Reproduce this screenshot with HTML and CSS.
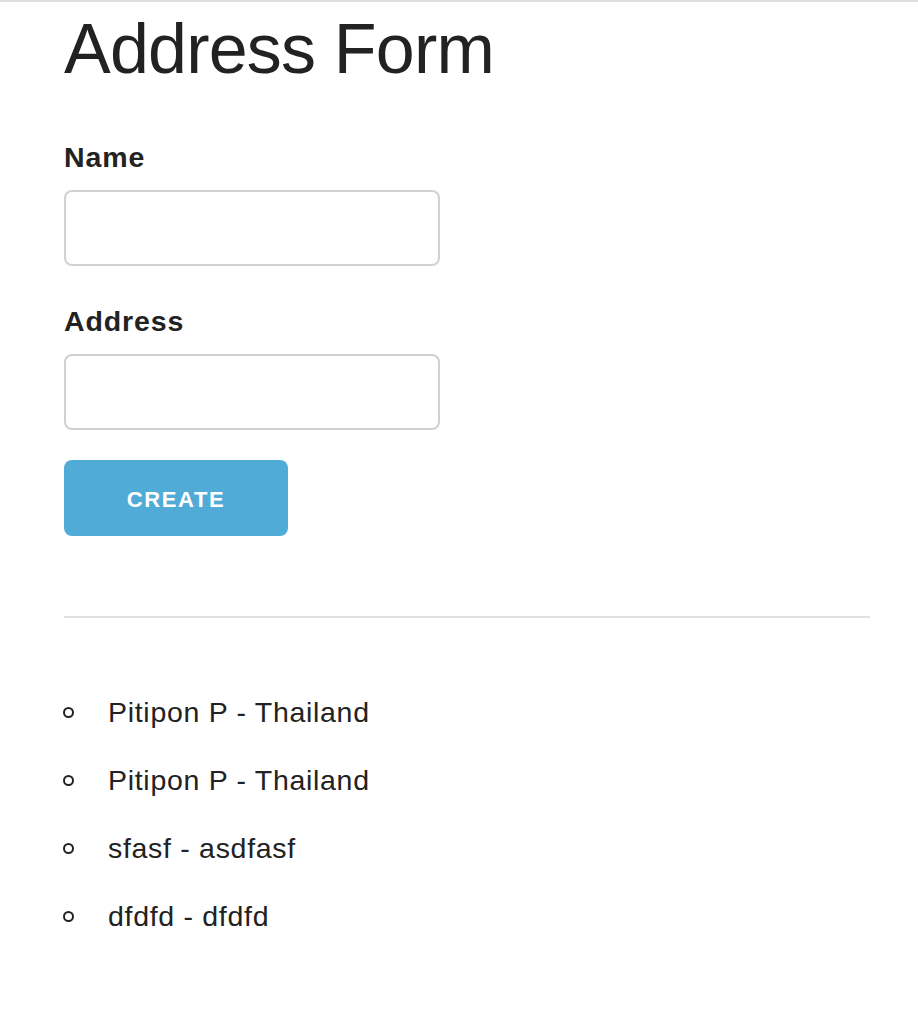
FILE: index.html
```html
<!DOCTYPE html>
<html>
<head>
<meta charset="utf-8">
<link rel="stylesheet" href="styles.css">
</head>
<body>
<div class="page">
  <h1 class="title">Address Form</h1>
  <form class="form">
    <label class="label" for="name">Name</label>
    <input class="input" id="name" type="text">
    <label class="label label-second" for="address">Address</label>
    <input class="input" id="address" type="text">
    <button class="button" type="button">CREATE</button>
  </form>
  <hr class="rule">
  <ul class="list">
    <li class="item">Pitipon P - Thailand</li>
    <li class="item">Pitipon P - Thailand</li>
    <li class="item">sfasf - asdfasf</li>
    <li class="item">dfdfd - dfdfd</li>
  </ul>
</div>
</body>
</html>
```
FILE: styles.css
```css
html, body {
  margin: 0;
  padding: 0;
  background: #fff;
}
body {
  border-top: 2px solid #dfe1e1;
  font-family: "Liberation Sans", Arial, sans-serif;
  color: #222;
}
.page {
  padding: 12px 48px 0 64px;
}
.title {
  margin: 0;
  font-size: 70px;
  line-height: 70px;
  font-weight: 400;
  letter-spacing: -0.8px;
  color: #222;
}
.form {
  display: flex;
  flex-direction: column;
  align-items: flex-start;
  margin-top: 60px;
}
.label {
  display: block;
  font-size: 28.5px;
  line-height: 27px;
  font-weight: 700;
  letter-spacing: 0.9px;
  color: #222;
}
.label-second {
  margin-top: 42px;
}
.input {
  box-sizing: border-box;
  margin: 19px 0 0;
  width: 376px;
  height: 76px;
  border: 2px solid #d1d1d1;
  border-radius: 8px;
  background: #fff;
  padding: 0 16px;
  font-size: 26px;
  outline: none;
}
.button {
  box-sizing: border-box;
  margin-top: 30px;
  width: 224px;
  height: 76px;
  border: none;
  border-radius: 8px;
  background: #50abd7;
  color: #fff;
  font-family: "Liberation Sans", Arial, sans-serif;
  font-weight: 700;
  font-size: 22px;
  letter-spacing: 1.6px;
  padding: 4px 0 0;
}
.rule {
  margin: 80px 0 0;
  border: 0;
  border-top: 2px solid #e1e1e1;
  width: 806px;
}
.list {
  list-style: none;
  margin: 60px 0 0;
  padding: 0;
}
.item {
  display: flex;
  align-items: center;
  height: 68px;
  font-size: 28.5px;
  letter-spacing: 0.7px;
  color: #222;
}
.item::before {
  content: "";
  box-sizing: border-box;
  width: 11px;
  height: 11px;
  border: 2px solid #222;
  border-radius: 50%;
  margin-left: -1px;
  margin-right: 34px;
  flex: none;
}
```
